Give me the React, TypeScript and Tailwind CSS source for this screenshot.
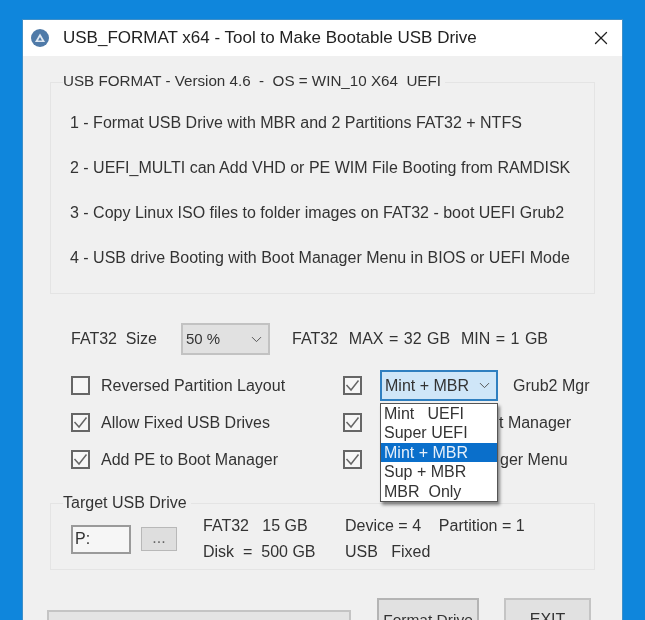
import React from 'react';
import { ChevronDown, X } from 'lucide-react';

const Check = ({ on = true }: { on?: boolean }) => (
  <span className="w-[19px] h-[19px] shrink-0 border-2 border-[#666] bg-[#f6f6f6] flex items-center justify-center">
    {on && (
      <svg width="15" height="15" viewBox="0 0 15 15" fill="none" stroke="#666" strokeWidth="1.5">
        <path d="M1.5 7 L6 12 L13.5 2.5" />
      </svg>
    )}
  </span>
);

const Option = ({ label, on = true }: { label: string; on?: boolean }) => (
  <div className="flex items-center gap-[11px] h-[19px] whitespace-nowrap">
    <Check on={on} />
    <span>{label}</span>
  </div>
);

const lines = [
  '1 - Format USB Drive with MBR and 2 Partitions FAT32 + NTFS',
  '2 - UEFI_MULTI can Add VHD or PE WIM File Booting from RAMDISK',
  '3 - Copy Linux ISO files to folder images on FAT32 - boot UEFI Grub2',
  '4 - USB drive Booting with Boot Manager Menu in BIOS or UEFI Mode',
];

const menu = ['Mint   UEFI', 'Super UEFI', 'Mint + MBR', 'Sup + MBR', 'MBR  Only'];

export default function App() {
  return (
    <div className="w-[645px] h-[620px] overflow-hidden bg-[#0f86dc] pt-[19px] pl-[22px] font-['Liberation_Sans',sans-serif] text-[#333] text-[16px] blur-[0.4px]">
      <div className="w-[601px] h-[640px] bg-[#f0f0f0] border border-[#3f8fc8] relative">
        {/* title bar */}
        <div className="h-[36px] bg-white flex items-center pl-[7px] pr-[10px] text-[17px] text-[#222]">
          <svg width="20" height="20" viewBox="0 0 20 20" className="mr-[13px]">
            <circle cx="10" cy="10" r="9" fill="#4f7aa8" />
            <path d="M10 5.5 L15 14 H5 Z" fill="#dfe8f2" />
            <path d="M10 9 L12 12.5 H8 Z" fill="#4f7aa8" />
          </svg>
          <span className="flex-1">USB_FORMAT x64 - Tool to Make Bootable USB Drive</span>
          <X size={22} strokeWidth={1.4} className="text-[#222]" />
        </div>

        <div className="px-[27px] w-[599px]">
          {/* info group */}
          <div className="relative mt-[26px] h-[212px] border border-[#e4e4e4] pl-[19px] pt-[31px]">
            <span className="absolute -top-[13px] left-[12px] bg-[#f0f0f0] pr-1 text-[15.2px] whitespace-pre">USB FORMAT - Version 4.6  -  OS = WIN_10 X64  UEFI</span>
            <div className="flex flex-col gap-[27px] whitespace-nowrap">
              {lines.map((l) => (
                <div key={l} className="h-[18px] leading-[18px]">{l}</div>
              ))}
            </div>
          </div>

          {/* size row */}
          <div className="mt-[28px] pl-[21px] flex items-center h-[34px]">
            <span className="w-[110px] whitespace-pre">FAT32  Size</span>
            <div className="w-[89px] h-[32px] bg-[#e1e1e1] border-2 border-[#c2c2c2] flex items-center justify-between px-[3px] text-[15px]">
              <span>50 %</span>
              <ChevronDown size={17} strokeWidth={1.4} className="text-[#555]" />
            </div>
            <span className="ml-[22px] whitespace-pre [word-spacing:1px]">FAT32  MAX = 32 GB  MIN = 1 GB</span>
          </div>

          {/* options */}
          <div className="mt-[20px] pl-[21px] flex">
            <div className="w-[272px] flex flex-col gap-[18px]">
              <Option label="Reversed Partition Layout" on={false} />
              <Option label="Allow Fixed USB Drives" />
              <Option label="Add PE to Boot Manager" />
            </div>
            <div className="flex flex-col gap-[18px]">
              <div className="relative flex items-center h-[19px]">
                <Check />
                <div className="ml-[18px] w-[118px] h-[31px] bg-[#cfe6f8] border-2 border-[#2f7fc0] flex items-center justify-between pl-[3px] pr-[3px]">
                  <span>Mint + MBR</span>
                  <ChevronDown size={17} strokeWidth={1.4} className="text-[#555]" />
                </div>
                <span className="ml-[15px] whitespace-nowrap">Grub2 Mgr</span>

                {/* open list */}
                <div className="absolute left-[37px] top-[27px] z-10 w-[118px] bg-white border border-[#555] shadow-[2px_3px_3px_rgba(0,0,0,0.45)] leading-[19.4px] text-[#333]">
                  {menu.map((m) => (
                    <div key={m} className={`pl-[3px] h-[19.4px] whitespace-pre ${m === 'Mint + MBR' ? 'bg-[#0a6fcb] text-[#e6f0fa]' : ''}`}>{m}</div>
                  ))}
                </div>
              </div>
              {/* the rest of these two labels is behind the open list */}
              <div className="flex items-center h-[19px]">
                <Check />
                <span className="ml-[137px] whitespace-pre">t Manager</span>
              </div>
              <div className="flex items-center h-[19px]">
                <Check />
                <span className="ml-[138px] whitespace-nowrap">ger Menu</span>
              </div>
            </div>
          </div>

          {/* target drive group */}
          <div className="relative mt-[34px] h-[67px] border border-[#e4e4e4] pl-[20px] flex items-center">
            <span className="absolute -top-[13px] left-[12px] bg-[#f0f0f0] pr-1">Target USB Drive</span>
            <div className="w-[60px] h-[29px] mt-[5px] bg-[#f6f6f6] border-2 border-[#9a9a9a] pl-[2px] leading-[24px]">P:</div>
            <div className="ml-[10px] mt-[5px] w-[36px] h-[24px] bg-[#dedede] border border-[#b8b8b8] text-center leading-[19px] text-[#666]">...</div>
            <div className="ml-[26px] w-[142px] flex flex-col gap-[2px] mt-[4px] whitespace-pre">
              <span>FAT32   15 GB</span>
              <span>Disk  =  500 GB</span>
            </div>
            <div className="flex flex-col gap-[2px] mt-[4px] whitespace-pre">
              <span>Device = 4    Partition = 1</span>
              <span>USB   Fixed</span>
            </div>
          </div>

          {/* bottom */}
          <div className="mt-[28px] flex items-start -ml-[3px]">
            <div className="mt-[12px] w-[304px] h-[32px] bg-[#e4e4e4] border-2 border-[#c4c4c4]" />
            <div className="ml-[26px] w-[102px] h-[40px] bg-[#e1e1e1] border-2 border-[#b4b4b4] text-center pt-[8px] text-[15.5px] whitespace-nowrap">Format Drive</div>
            <div className="ml-[25px] w-[87px] h-[40px] bg-[#e1e1e1] border-2 border-[#c4c4c4] text-center pt-[8px]">EXIT</div>
          </div>
        </div>
      </div>
    </div>
  );
}
